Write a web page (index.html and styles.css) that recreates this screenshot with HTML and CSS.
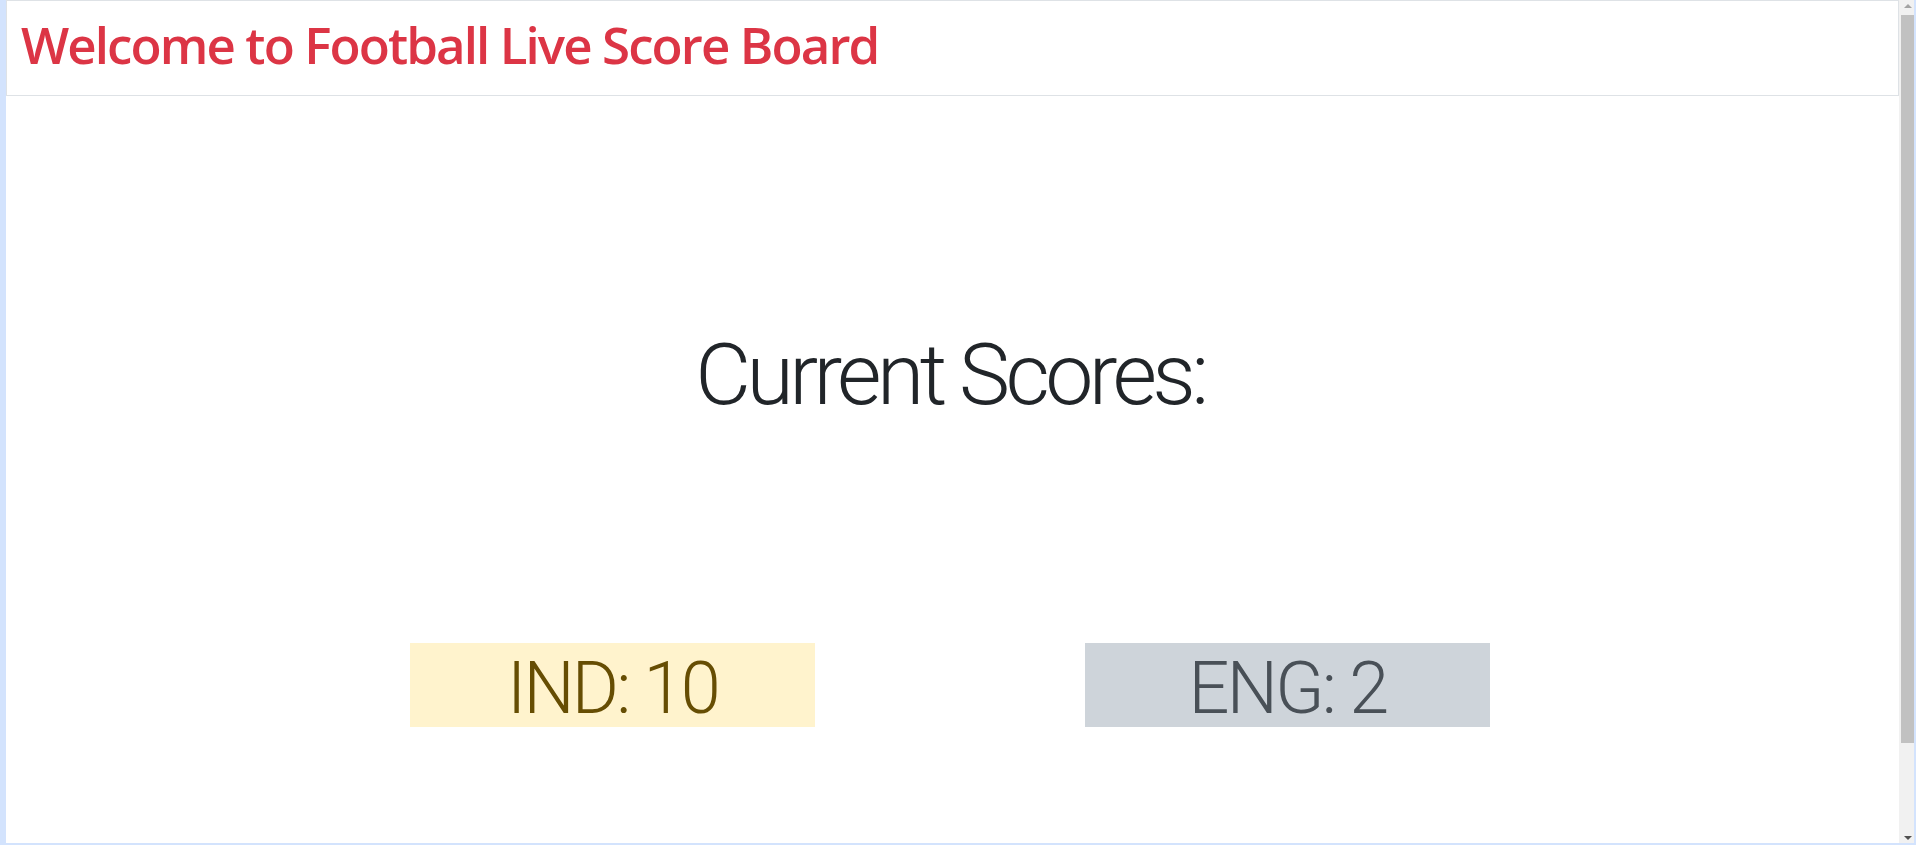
FILE: index.html
```html
<!DOCTYPE html>
<html lang="en">
<head>
<meta charset="utf-8">
<title>Football Live Score Board</title>
<link rel="stylesheet" href="styles.css">
</head>
<body>
<div class="window">
  <div class="viewport">
    <header class="topbar">
      <h1 class="brand">Welcome to Football Live Score Board</h1>
    </header>
    <main class="board">
      <h2 class="heading">Current Scores:</h2>
      <div class="scores">
        <div class="score score-ind">IND: 10</div>
        <div class="score score-eng">ENG: 2</div>
      </div>
    </main>
  </div>
  <div class="scrollbar">
    <div class="arrow arrow-up"></div>
    <div class="track"><div class="thumb"></div></div>
    <div class="arrow arrow-down"></div>
  </div>
</div>
</body>
</html>
```
FILE: styles.css
```css
html, body {
  margin: 0;
  height: 100%;
  overflow: hidden;
}
body {
  background: #d3e3fd;
  font-family: "Open Sans", "Noto Sans", sans-serif;
}
.window {
  display: flex;
  height: 843px;
  padding-left: 6px;
  padding-right: 2px;
  box-sizing: border-box;
}
.viewport {
  flex: 1;
  background: #fff;
  overflow: hidden;
  min-width: 0;
}
.topbar {
  height: 96px;
  box-sizing: border-box;
  border: 1px solid #dee2e6;
  padding: 13px 0 0 14px;
}
.brand {
  margin: 0;
  font-size: 51px;
  font-weight: 600;
  letter-spacing: -1.9px;
  line-height: 1.2;
  color: #dc3545;
}
.board {
  display: flex;
  flex-direction: column;
  align-items: center;
  padding-right: 5px;
  font-family: Roboto, "Open Sans", sans-serif;
}
.heading {
  margin: 227px 0 0;
  font-size: 86px;
  font-weight: 300;
  letter-spacing: -4.6px;
  line-height: 1.2;
  color: #212529;
}
.scores {
  display: flex;
  gap: 270px;
  margin-top: 217px;
}
.score {
  width: 405px;
  height: 84px;
  box-sizing: border-box;
  padding-top: 10px;
  text-align: center;
  font-size: 72px;
  font-weight: 300;
  letter-spacing: -2.7px;
  line-height: 1;
}
.score-ind {
  background: #fff3cd;
  color: #664d03;
}
.score-eng {
  background: #ced4da;
  color: #495057;
}
.scrollbar {
  width: 15px;
  background: #f1f1f1;
  display: flex;
  flex-direction: column;
}
.arrow {
  height: 15px;
  display: flex;
  align-items: center;
  justify-content: center;
}
.arrow-up::before {
  content: "";
  border-left: 4px solid transparent;
  border-right: 4px solid transparent;
  border-bottom: 4px solid #a3a3a3;
  margin-left: 2px;
  margin-top: -4px;
}
.arrow-down::before {
  content: "";
  border-left: 4px solid transparent;
  border-right: 4px solid transparent;
  border-top: 4px solid #505050;
  margin-left: 2px;
  margin-top: 4px;
}
.track {
  flex: 1;
  padding-left: 2px;
}
.thumb {
  height: 728px;
  background: #c1c1c1;
}
```
